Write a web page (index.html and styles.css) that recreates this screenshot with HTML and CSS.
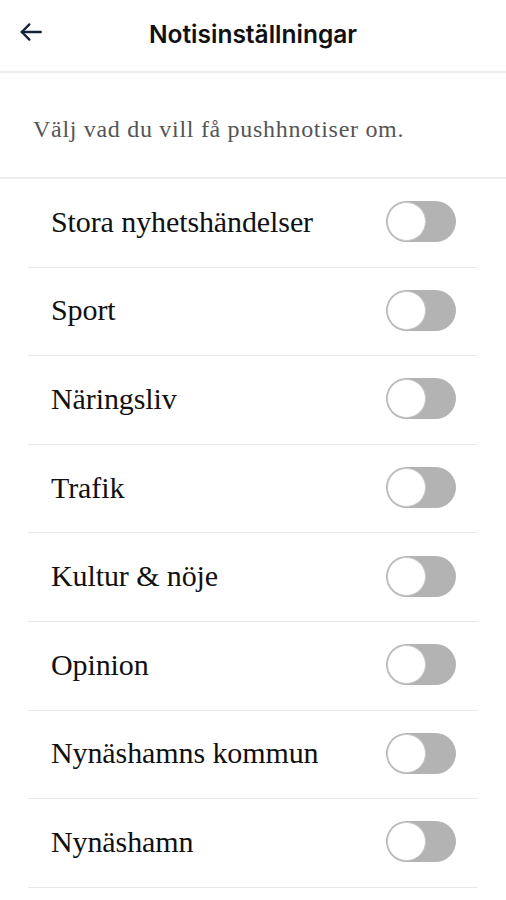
FILE: index.html
```html
<!DOCTYPE html>
<html lang="sv">
<head>
    <meta charset="UTF-8">
    <meta name="viewport" content="width=device-width, initial-scale=1.0">
    <title>Notisinställningar</title>
    <link rel="stylesheet" href="styles.css">
</head>
<body>
    <div class="header">
        <a class="back" href="#" aria-label="Tillbaka">
            <svg width="26" height="26" viewBox="0 0 24 24" fill="none" stroke="currentColor" stroke-width="2.2" stroke-linecap="round" stroke-linejoin="round">
                <path d="M21 12H3.5"/>
                <path d="M10.5 5L3.5 12l7 7"/>
            </svg>
        </a>
        <h1>Notisinställningar</h1>
    </div>

    <div class="intro">
        <p>Välj vad du vill få pushhnotiser om.</p>
    </div>

    <ul class="settings">
        <li class="setting"><span class="label">Stora nyhetshändelser</span><span class="toggle"><span class="knob"></span></span></li>
        <li class="setting"><span class="label">Sport</span><span class="toggle"><span class="knob"></span></span></li>
        <li class="setting"><span class="label">Näringsliv</span><span class="toggle"><span class="knob"></span></span></li>
        <li class="setting"><span class="label">Trafik</span><span class="toggle"><span class="knob"></span></span></li>
        <li class="setting"><span class="label">Kultur &amp; nöje</span><span class="toggle"><span class="knob"></span></span></li>
        <li class="setting"><span class="label">Opinion</span><span class="toggle"><span class="knob"></span></span></li>
        <li class="setting"><span class="label">Nynäshamns kommun</span><span class="toggle"><span class="knob"></span></span></li>
        <li class="setting"><span class="label">Nynäshamn</span><span class="toggle"><span class="knob"></span></span></li>
    </ul>
</body>
</html>
```

FILE: styles.css
```css
* {
    margin: 0;
    padding: 0;
    box-sizing: border-box;
}

body {
    background: #ffffff;
    color: #111111;
    font-family: 'Liberation Serif', serif;
    width: 506px;
    overflow: hidden;
}

.header {
    position: relative;
    height: 73px;
    display: flex;
    align-items: center;
    justify-content: center;
    border-bottom: 2px solid #ececec;
    padding-bottom: 4px;
}

.header h1 {
    font-family: 'Inter', 'Liberation Sans', sans-serif;
    font-weight: 600;
    font-size: 24.5px;
    color: #111;
}

.back {
    position: absolute;
    left: 18px;
    top: 19px;
    color: #14233a;
    display: flex;
}

.intro {
    height: 106px;
    display: flex;
    align-items: center;
    padding-left: 33px;
    padding-top: 8px;
    border-bottom: 2px solid #ececec;
}

.intro p {
    font-size: 24px;
    letter-spacing: 0.7px;
    color: #555;
}

.settings {
    list-style: none;
    padding: 0 28px;
}

.setting {
    height: 88.6px;
    display: flex;
    align-items: center;
    justify-content: space-between;
    padding: 0 22px 2px 23px;
    border-bottom: 1px solid #e8e8e8;
}

.label {
    font-size: 30px;
    color: #111;
    letter-spacing: -0.1px;
}

.toggle {
    position: relative;
    width: 70px;
    height: 41px;
    border-radius: 21px;
    background: #b3b3b3;
}

.knob {
    position: absolute;
    left: 1px;
    top: 1px;
    width: 39px;
    height: 39px;
    border-radius: 50%;
    background: #fff;
    border: 1.5px solid #c9c9c9;
}
```
